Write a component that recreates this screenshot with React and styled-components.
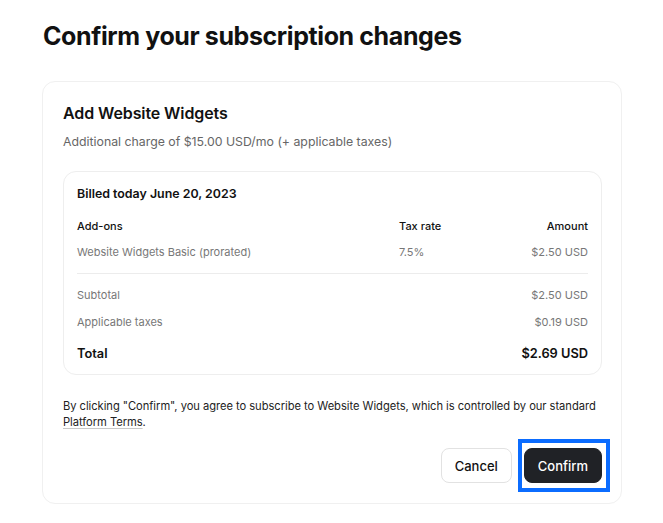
import React from "react";
import styled, { createGlobalStyle } from "styled-components";

const Global = createGlobalStyle`
  html, body { margin: 0; padding: 0; background: #ffffff; }
  body { font-family: Inter, "Noto Sans", sans-serif; color: #111111; -webkit-font-smoothing: antialiased; }
  * { box-sizing: border-box; }
`;

const Page = styled.div`
  padding: 20px 41px 20px 42px;
  width: 663px;
`;

const Title = styled.h1`
  margin: 0 0 29px 1px;
  font-size: 25px;
  line-height: 32px;
  font-weight: 700;
  letter-spacing: -0.4px;
  color: #111111;
`;

const Card = styled.section`
  border: 1px solid #f0f0f0;
  border-radius: 13px;
  padding: 19px 19px 20px 20px;
  width: 580px;
`;

const CardTitle = styled.h2`
  margin: 0;
  font-size: 16px;
  line-height: 24px;
  font-weight: 600;
  letter-spacing: -0.1px;
  color: #111111;
`;

const Sub = styled.p`
  margin: 7px 0 19px;
  font-size: 12.3px;
  line-height: 20px;
  color: #666666;
`;

const Inner = styled.div`
  border: 1px solid #eeeeee;
  border-radius: 13px;
  padding: 12px 13px 10px 13px;
`;

const Billed = styled.div`
  font-size: 12.4px;
  line-height: 20px;
  font-weight: 600;
  color: #111111;
  margin-bottom: 12px;
`;

const Row = styled.div`
  display: grid;
  grid-template-columns: 322px 1fr auto;
  font-size: ${(p) => (p.$total ? "12.8px" : "11px")};
  line-height: 20px;
  font-weight: ${(p) => (p.$head ? 500 : p.$total ? 600 : 400)};
  color: ${(p) => (p.$head || p.$total ? "#111111" : "#777777")};
  margin-top: ${(p) => p.$mt || 0}px;
`;

const Right = styled.span`
  text-align: right;
`;

const Divider = styled.div`
  height: 1px;
  background: #ececec;
  margin: 11px 0 11px;
`;

const Terms = styled.p`
  margin: 23px 0 18px;
  font-size: 11.15px;
  line-height: 16px;
  letter-spacing: -0.03px;
  color: #222222;
`;

const TermsLink = styled.a`
  color: #222222;
  text-decoration: underline;
  text-decoration-color: #c8c8c8;
  text-underline-offset: 2px;
`;

const Actions = styled.div`
  display: flex;
  justify-content: flex-end;
  gap: 12px;
`;

const Button = styled.button`
  position: relative;
  height: 35px;
  padding: 0 13px;
  border-radius: 8px;
  font-family: inherit;
  font-size: 13px;
  font-weight: 500;
  cursor: pointer;
  border: 1px solid ${(p) => (p.$primary ? "#202226" : "#e2e2e2")};
  background: ${(p) => (p.$primary ? "#202226" : "#ffffff")};
  color: ${(p) => (p.$primary ? "#ffffff" : "#111111")};
  ${(p) =>
    p.$focus &&
    `
    &::after {
      content: "";
      position: absolute;
      top: -10px;
      bottom: -10px;
      left: -7px;
      right: -9px;
      border: 4px solid #0b6cff;
      pointer-events: none;
    }
  `}
`;

export default function App() {
  return (
    <>
      <Global />
      <Page>
        <Title>Confirm your subscription changes</Title>
        <Card>
          <CardTitle>Add Website Widgets</CardTitle>
          <Sub>Additional charge of $15.00 USD/mo (+ applicable taxes)</Sub>
          <Inner>
            <Billed>Billed today June 20, 2023</Billed>
            <Row $head>
              <span>Add-ons</span>
              <span>Tax rate</span>
              <Right>Amount</Right>
            </Row>
            <Row $mt={6}>
              <span>Website Widgets Basic (prorated)</span>
              <span>7.5%</span>
              <Right>$2.50 USD</Right>
            </Row>
            <Divider />
            <Row>
              <span>Subtotal</span>
              <span />
              <Right>$2.50 USD</Right>
            </Row>
            <Row $mt={7}>
              <span>Applicable taxes</span>
              <span />
              <Right>$0.19 USD</Right>
            </Row>
            <Row $total $mt={12}>
              <span>Total</span>
              <span />
              <Right>$2.69 USD</Right>
            </Row>
          </Inner>
          <Terms>
            By clicking "Confirm", you agree to subscribe to Website Widgets, which is controlled by our standard{" "}
            <TermsLink href="#">Platform Terms</TermsLink>.
          </Terms>
          <Actions>
            <Button>Cancel</Button>
            <Button $primary $focus>
              Confirm
            </Button>
          </Actions>
        </Card>
      </Page>
    </>
  );
}
